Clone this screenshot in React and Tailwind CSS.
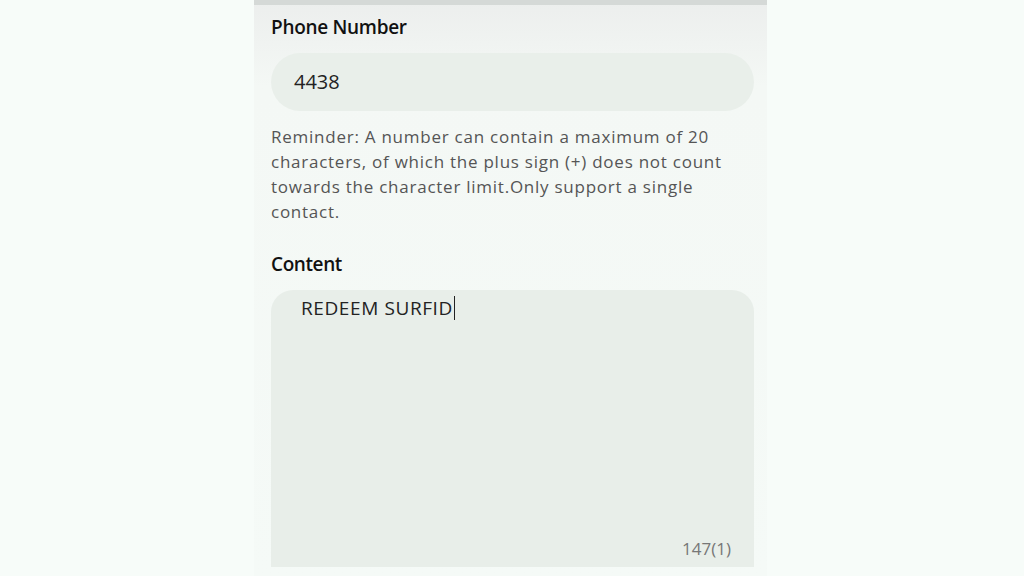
export default function App() {
  return (
    <div className="w-[1024px] h-[576px] overflow-hidden bg-[#f7fcf9] flex" style={{ fontFamily: '"Open Sans", "Noto Sans", sans-serif' }}>
      <div className="ml-[254px] w-[513px] h-full bg-gradient-to-b from-[#eceeed] via-[#f4f8f5] via-[15%] to-[#f5faf7] flex flex-col pl-[17px] pr-[13px]">
        <div className="h-[5px] -ml-[17px] -mr-[13px] bg-[#d5d9d7]"></div>
        <div className="mt-[10px] text-[19px] leading-[24px] font-semibold text-[#111] tracking-[-0.3px]">Phone Number</div>
        <div className="mt-[14px] h-[58px] rounded-full bg-[#e9efea] flex items-center px-[23px] text-[20px] text-[#222]">4438</div>
        <div className="mt-[13px] text-[17px] leading-[25px] text-[#555] tracking-[0.75px] whitespace-nowrap">
          Reminder: A number can contain a maximum of 20<br />
          characters, of which the plus sign (+) does not count<br />
          towards the character limit.Only support a single<br />
          contact.
        </div>
        <div className="mt-[28px] text-[19px] leading-[24px] font-semibold text-[#111] tracking-[-0.4px]">Content</div>
        <div className="mt-[14px] h-[277px] rounded-t-[22px] bg-[#e8eee9] flex flex-col px-[30px] pt-[4px] pb-[6px]">
          <div className="flex items-center text-[19px] leading-[28px] text-[#222] tracking-[0.6px]">
            REDEEM SURFID<span className="inline-block w-[1.5px] h-[24px] bg-[#222] ml-[1px]"></span>
          </div>
          <div className="mt-auto self-end -mr-[7px] text-[17px] text-[#777]">147(1)</div>
        </div>
      </div>
    </div>
  )
}
